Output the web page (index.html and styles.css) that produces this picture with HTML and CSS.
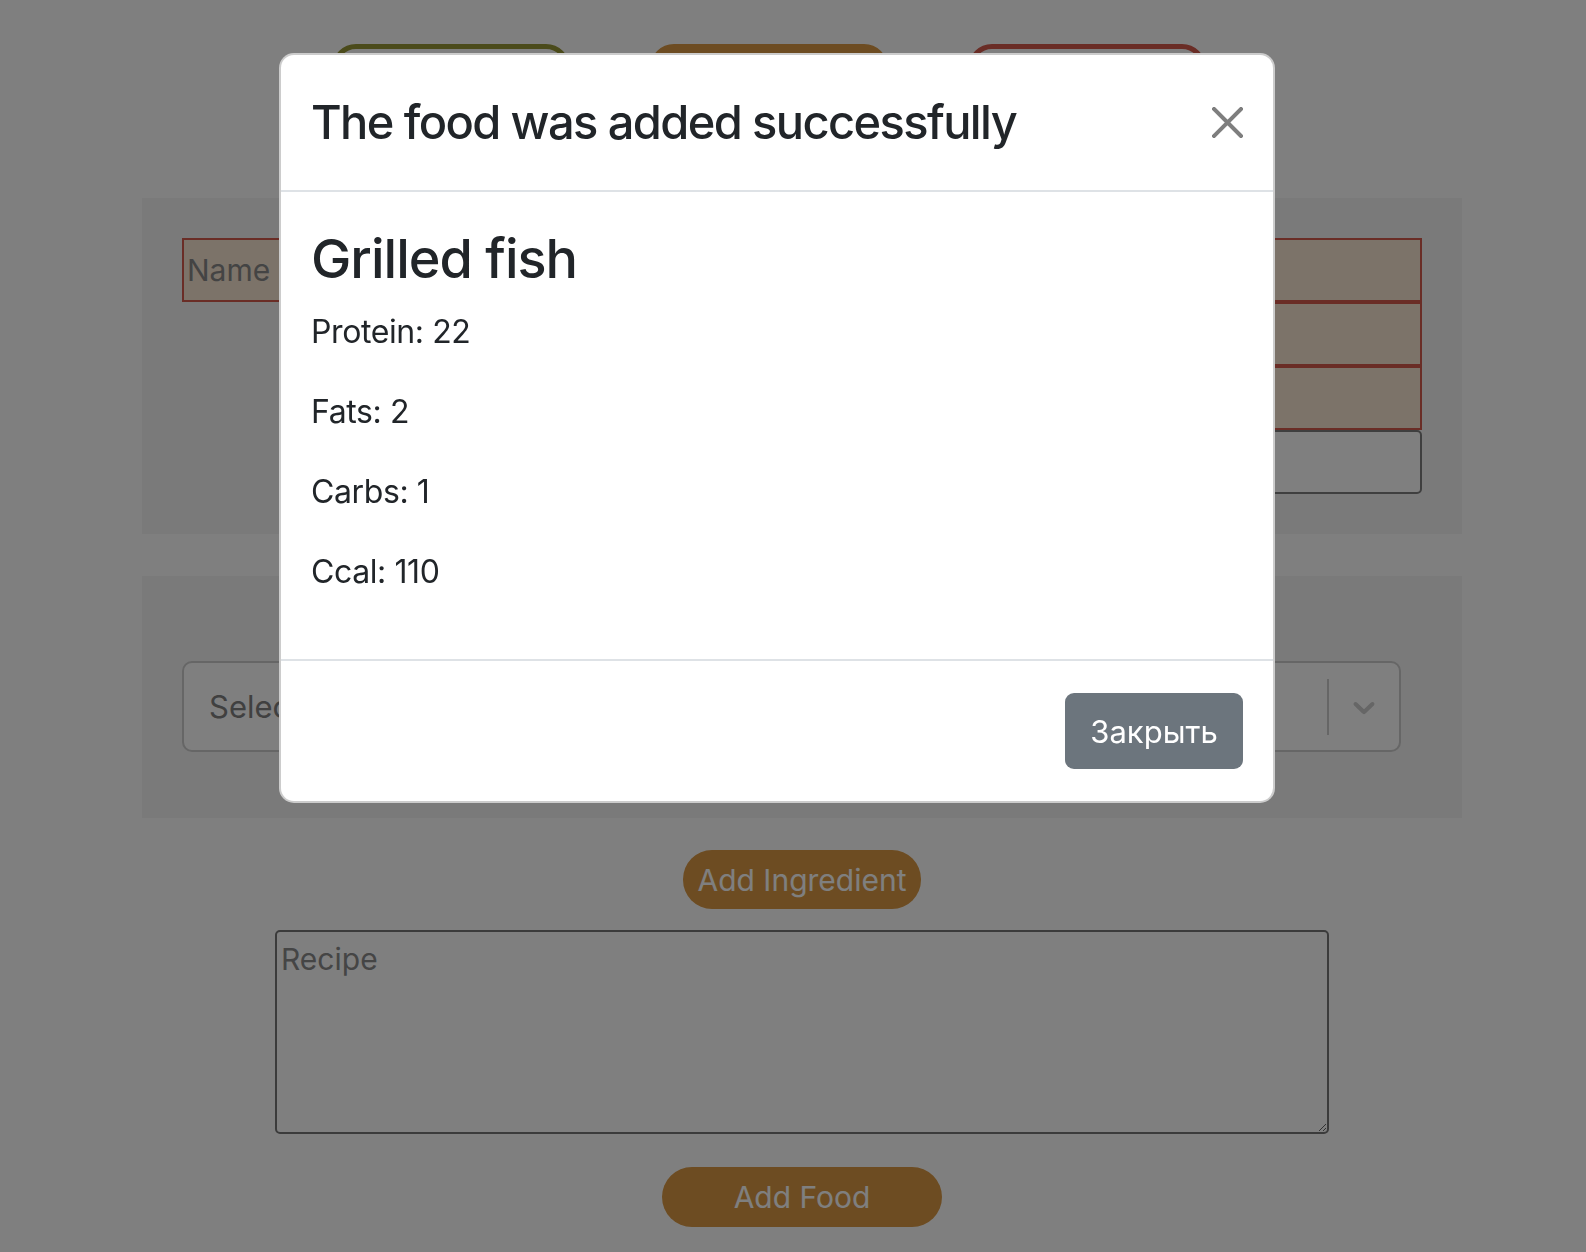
FILE: index.html
```html
<!DOCTYPE html>
<html lang="en">
<head>
<meta charset="utf-8">
<title>Add food</title>
<link rel="stylesheet" href="styles.css">
</head>
<body>
<div class="page">
  <nav class="tabs">
    <button class="tab tab-green" aria-label="Foods"></button>
    <button class="tab tab-orange" aria-label="Add"></button>
    <button class="tab tab-red" aria-label="Logout"></button>
  </nav>

  <section class="panel panel-fields">
    <input class="field field-wide" placeholder="Name">
    <input class="field field-narrow" aria-label="Protein">
    <input class="field field-narrow" aria-label="Fats">
    <input class="field field-narrow field-plain" aria-label="Carbs">
  </section>

  <section class="panel panel-ingredients">
    <div class="select">
      <span class="select-placeholder">Select...</span>
      <span class="select-sep"></span>
      <span class="select-arrow">
        <svg width="36" height="36" viewBox="0 0 20 20"><path d="M4.516 7.548c0.436-0.446 1.043-0.481 1.576 0l3.908 3.747 3.908-3.747c0.533-0.481 1.141-0.446 1.574 0 0.436 0.445 0.408 1.197 0 1.615-0.406 0.418-4.695 4.502-4.695 4.502-0.217 0.223-0.502 0.335-0.787 0.335s-0.57-0.112-0.789-0.335c0 0-4.287-4.084-4.695-4.502s-0.436-1.170 0-1.615z" fill="#cccccc"/></svg>
      </span>
    </div>
  </section>

  <button class="pill pill-ingredient">Add Ingredient</button>
  <textarea class="recipe" placeholder="Recipe"></textarea>
  <button class="pill pill-food">Add Food</button>
</div>

<div class="backdrop">
  <div class="modal">
    <div class="modal-header">
      <h5 class="modal-title">The food was added successfully</h5>
      <button class="btn-close" aria-label="Close">
        <svg width="31" height="31" viewBox="0 0 31 31"><path d="M2 2 L29 29 M29 2 L2 29" stroke="#000" stroke-width="4" stroke-linecap="square"/></svg>
      </button>
    </div>
    <div class="modal-body">
      <h4 class="food-name">Grilled fish</h4>
      <p class="stat">Protein: 22</p>
      <p class="stat">Fats: 2</p>
      <p class="stat">Carbs: 1</p>
      <p class="stat">Ccal: 110</p>
    </div>
    <div class="modal-footer">
      <button class="btn-secondary">Закрыть</button>
    </div>
  </div>
</div>
</body>
</html>
```

FILE: styles.css
```css
* { box-sizing: border-box; }
html, body { margin: 0; padding: 0; }
body {
  background: #ffffff;
  font-family: Inter, "Noto Sans", sans-serif;
  width: 1586px;
  height: 1252px;
  overflow: hidden;
}

.page {
  margin-left: 142px;
  width: 1320px;
  display: flex;
  flex-direction: column;
  align-items: center;
}

.tabs {
  align-self: stretch;
  display: flex;
  gap: 80px;
  padding-left: 190px;
  padding-top: 44px;
}
.tab {
  width: 238px;
  height: 90px;
  border-radius: 24px;
  border: 5px solid;
  padding: 0;
}
.tab-green { background: #ffffff; border-color: #979637; }
.tab-orange { background: #da9944; border-color: #da9944; }
.tab-red { background: #ffffff; border-color: #d45a4c; }

.panel {
  align-self: stretch;
  background: #f4f4f4;
  padding: 40px;
}
.panel-fields {
  margin-top: 64px;
  display: flex;
  flex-direction: column;
  align-items: flex-end;
}
.field {
  height: 64px;
  border: 2.5px solid #d45a4c;
  background: #f8e6d2;
  font-family: Inter, sans-serif;
  font-size: 30px;
  padding: 0 3px;
  color: #222;
  outline: none;
}
.field::placeholder { color: #888888; }
.field-wide { width: 1240px; }
.field-narrow { width: 800px; }
.field-plain {
  background: #ffffff;
  border-color: #7e7e7e;
  border-radius: 0 5px 5px 0;
}

.panel-ingredients {
  margin-top: 42px;
  padding: 85px 61px 66px 40px;
}
.select {
  height: 91px;
  border: 2.5px solid #cccccc;
  border-radius: 10px;
  background: #ffffff;
  display: flex;
  align-items: center;
}
.select-placeholder {
  flex: 1;
  padding-left: 25px;
  font-size: 31px;
  color: #808080;
}
.select-sep {
  width: 2.5px;
  height: 56px;
  background: #cccccc;
}
.select-arrow {
  width: 70px;
  display: flex;
  justify-content: center;
  align-items: center;
}
.select-arrow svg { display: block; }

.pill {
  border: none;
  background: #da9944;
  color: #ffffff;
  font-family: Inter, sans-serif;
  font-size: 30px;
  cursor: pointer;
}
.pill-ingredient {
  margin-top: 32px;
  width: 238px;
  height: 59px;
  border-radius: 29px;
  padding: 0;
}
.recipe {
  margin-top: 21px;
  width: 1054px;
  height: 204px;
  border: 2.5px solid #767676;
  border-radius: 5px;
  font-family: Inter, sans-serif;
  font-size: 30px;
  padding: 9px 4px;
  background: #ffffff;
}
.recipe::placeholder { color: #8a8a8a; }
.pill-food {
  margin-top: 33px;
  width: 280px;
  height: 60px;
  border-radius: 30px;
  padding: 0;
}

.backdrop {
  position: fixed;
  inset: 0;
  background: rgba(0, 0, 0, 0.5);
}
.modal {
  position: absolute;
  left: 279px;
  top: 53px;
  width: 996px;
  background: #ffffff;
  border: 2px solid rgba(0, 0, 0, 0.2);
  border-radius: 15px;
  color: #212529;
  overflow: hidden;
}
.modal-header {
  display: flex;
  align-items: center;
  justify-content: space-between;
  padding: 37px 30px 38px 30px;
  border-bottom: 2px solid #dee2e6;
}
.modal-title {
  margin: 0;
  font-size: 47px;
  font-weight: 500;
  line-height: 60px;
  letter-spacing: -1.6px;
}
.btn-close {
  border: none;
  background: transparent;
  padding: 0;
  opacity: 0.5;
  width: 31px;
  height: 31px;
  cursor: pointer;
}
.btn-close svg { display: block; }

.modal-body {
  padding: 34px 30px 37px 30px;
}
.food-name {
  margin: 0 0 10px 0;
  font-size: 54px;
  font-weight: 500;
  line-height: 66px;
  letter-spacing: -1px;
}
.stat {
  margin: 0 0 20px 0;
  font-size: 32px;
  line-height: 60px;
  letter-spacing: -0.4px;
}

.modal-footer {
  display: flex;
  justify-content: flex-end;
  padding: 32px 30px 32px 30px;
  border-top: 2px solid #dee2e6;
}
.btn-secondary {
  width: 178px;
  height: 76px;
  border: none;
  border-radius: 9px;
  background: #6c757d;
  color: #ffffff;
  font-family: Inter, sans-serif;
  font-size: 31px;
  padding: 0;
}
```
